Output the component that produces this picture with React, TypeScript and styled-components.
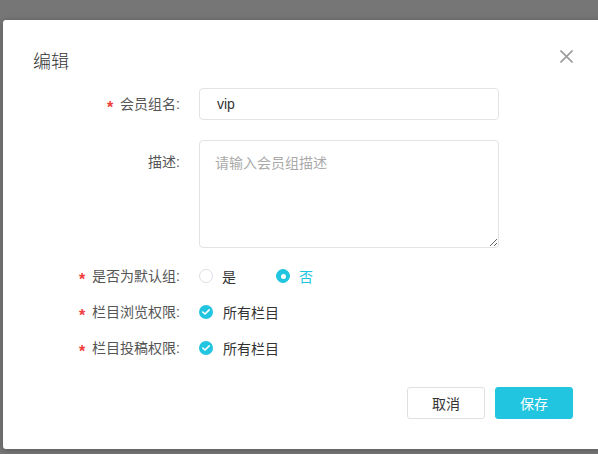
import React from "react";
import styled, { createGlobalStyle } from "styled-components";

const Global = createGlobalStyle`
  html, body { margin: 0; padding: 0; }
  body {
    background: #767676;
    width: 598px;
    height: 454px;
    overflow: hidden;
    font-family: "Liberation Sans", Arial, "Noto Sans CJK SC", sans-serif;
  }
  * { box-sizing: border-box; }
`;

const CYAN = "#22c5e0";

const Overlay = styled.div`
  width: 598px;
  height: 454px;
  padding: 20px 0 0 3px;
  overflow: hidden;
`;

const Modal = styled.div`
  width: 600px;
  height: 429px;
  background: #fff;
  border-radius: 3px;
  box-shadow: 0 1px 6px rgba(0, 0, 0, 0.25);
  padding: 28px 30px 30px 30px;
  display: flex;
  flex-direction: column;
`;

const Header = styled.div`
  display: flex;
  justify-content: space-between;
  align-items: flex-start;
`;

const Title = styled.h2`
  margin: 0;
  font-size: 18px;
  line-height: 24px;
  font-weight: 300;
  color: #333;
  font-family: "Noto Sans CJK SC", sans-serif;
`;

const Close = styled.button`
  border: 0;
  background: none;
  padding: 0;
  margin-top: 2px;
  width: 13px;
  height: 13px;
  display: flex;
  cursor: pointer;
`;

const Form = styled.div`
  margin-top: 16px;
  display: flex;
  flex-direction: column;
`;

const Row = styled.div<{ $h?: number; $mt?: number; $align?: string }>`
  display: grid;
  grid-template-columns: 147px 300px;
  column-gap: 19px;
  align-items: ${(p) => p.$align || "center"};
  min-height: ${(p) => (p.$h ? `${p.$h}px` : "auto")};
  margin-top: ${(p) => p.$mt || 0}px;
`;

const Label = styled.label<{ $top?: number }>`
  text-align: right;
  font-size: 14px;
  line-height: 20px;
  color: #555;
  font-family: "Liberation Sans", Arial, "Noto Sans CJK SC", sans-serif;
  white-space: nowrap;
  padding-top: ${(p) => p.$top || 0}px;
`;

const Star = styled.span`
  color: #f03c3c;
  margin-right: 7px;
  font-size: 16px;
  font-weight: bold;
  line-height: 0;
  vertical-align: -4px;
`;

const Input = styled.input`
  width: 300px;
  height: 32px;
  border: 1px solid #e3e3e3;
  border-radius: 4px;
  padding: 0 17px;
  font-size: 14px;
  color: #333;
  font-family: "Liberation Sans", Arial, "Noto Sans CJK SC", sans-serif;
  outline: none;
`;

const TextArea = styled.textarea`
  width: 300px;
  height: 108px;
  border: 1px solid #e3e3e3;
  border-radius: 4px;
  padding: 11px 15px;
  font-size: 14px;
  line-height: 20px;
  color: #333;
  font-family: "Noto Sans CJK SC", sans-serif;
  outline: none;
  display: block;
  &::placeholder { color: #aaa; }
`;

const Options = styled.div`
  display: flex;
  align-items: center;
  gap: 40px;
`;

const Option = styled.span<{ $active?: boolean }>`
  display: inline-flex;
  align-items: center;
  gap: 9px;
  font-size: 14px;
  color: ${(p) => (p.$active ? CYAN : "#333")};
  font-family: "Noto Sans CJK SC", sans-serif;
`;

const RadioDot = styled.span<{ $checked?: boolean }>`
  width: 14px;
  height: 14px;
  border-radius: 50%;
  border: 1px solid ${(p) => (p.$checked ? CYAN : "#dcdfe6")};
  background: ${(p) => (p.$checked ? CYAN : "#fff")};
  display: inline-flex;
  align-items: center;
  justify-content: center;
  &::after {
    content: "";
    width: 5px;
    height: 5px;
    border-radius: 50%;
    background: #fff;
    display: ${(p) => (p.$checked ? "block" : "none")};
  }
`;

const Check = styled.span`
  display: inline-flex;
  align-items: center;
  gap: 10px;
  font-size: 14px;
  color: #333;
  font-family: "Noto Sans CJK SC", sans-serif;
`;

const CheckCircle = styled.span`
  width: 14px;
  height: 14px;
  border-radius: 50%;
  background: ${CYAN};
  display: inline-flex;
  align-items: center;
  justify-content: center;
`;

const Footer = styled.div`
  margin-top: 21px;
  display: flex;
  justify-content: flex-end;
  gap: 10px;
`;

const Button = styled.button<{ $primary?: boolean }>`
  width: 78px;
  height: 32px;
  border-radius: 3px;
  border: 1px solid ${(p) => (p.$primary ? CYAN : "#e0e0e0")};
  background: ${(p) => (p.$primary ? CYAN : "#fff")};
  color: ${(p) => (p.$primary ? "#fff" : "#333")};
  font-size: 14px;
  font-family: "Noto Sans CJK SC", sans-serif;
  cursor: pointer;
  padding: 0;
`;

const CheckMark = () => (
  <svg width="8" height="6" viewBox="0 0 8 6">
    <path d="M0.8 3 L3 5 L7.2 0.9" fill="none" stroke="#fff" strokeWidth="1.6" strokeLinecap="round" strokeLinejoin="round" />
  </svg>
);

export default function App() {
  return (
    <>
      <Global />
      <Overlay>
        <Modal>
          <Header>
            <Title>编辑</Title>
            <Close aria-label="close">
              <svg width="13" height="13" viewBox="0 0 13 13">
                <path d="M0.5 0.5 L12.5 12.5 M12.5 0.5 L0.5 12.5" stroke="#9a9a9a" strokeWidth="1.6" />
              </svg>
            </Close>
          </Header>
          <Form>
            <Row>
              <Label><Star>*</Star>会员组名:</Label>
              <Input defaultValue="vip" />
            </Row>
            <Row $mt={20} $align="start">
              <Label $top={12}>描述:</Label>
              <TextArea placeholder="请输入会员组描述" />
            </Row>
            <Row $mt={10} $h={36}>
              <Label><Star>*</Star>是否为默认组:</Label>
              <Options>
                <Option><RadioDot />是</Option>
                <Option $active><RadioDot $checked />否</Option>
              </Options>
            </Row>
            <Row $h={36}>
              <Label><Star>*</Star>栏目浏览权限:</Label>
              <Check><CheckCircle><CheckMark /></CheckCircle>所有栏目</Check>
            </Row>
            <Row $h={36}>
              <Label><Star>*</Star>栏目投稿权限:</Label>
              <Check><CheckCircle><CheckMark /></CheckCircle>所有栏目</Check>
            </Row>
          </Form>
          <Footer>
            <Button>取消</Button>
            <Button $primary>保存</Button>
          </Footer>
        </Modal>
      </Overlay>
    </>
  );
}
